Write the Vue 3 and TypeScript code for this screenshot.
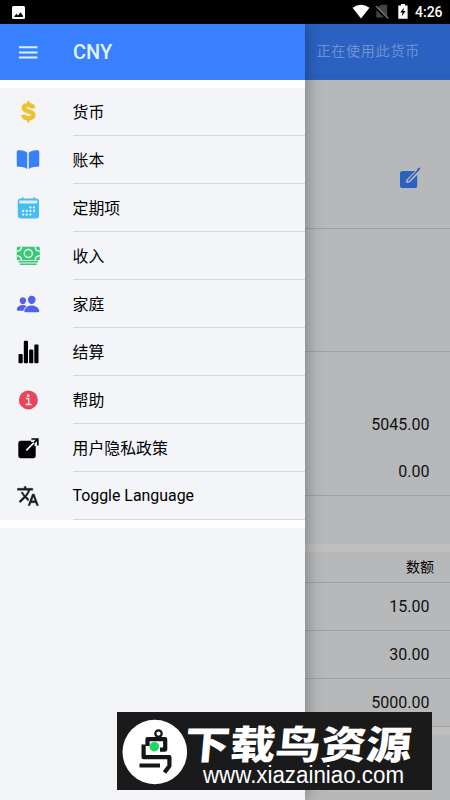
<script setup lang="ts">
interface MenuItem {
  icon: string
  label: string
}

const menu: MenuItem[] = [
  { icon: 'dollar', label: '货币' },
  { icon: 'book', label: '账本' },
  { icon: 'calendar', label: '定期项' },
  { icon: 'cash', label: '收入' },
  { icon: 'people', label: '家庭' },
  { icon: 'stats', label: '结算' },
  { icon: 'info', label: '帮助' },
  { icon: 'open', label: '用户隐私政策' },
  { icon: 'translate', label: 'Toggle Language' },
]

const totals: string[] = ['5045.00', '0.00']
const amounts: string[] = ['15.00', '30.00', '5000.00']
const calendarDots: [number, number][] = [
  [14.4, 11.4], [18, 11.4],
  [7.2, 15], [10.8, 15], [14.4, 15], [18, 15],
  [7.2, 18.6], [10.8, 18.6], [14.4, 18.6],
]
</script>

<template>
  <div class="screen">
    <header class="status">
      <svg class="status-photo" viewBox="0 0 13 13">
        <rect width="13" height="13" rx="1.6" fill="#fff" />
        <path d="M2 11 4.3 7.8 6 9.6 8.5 6.3 11 9.7V11z" fill="#000" />
      </svg>
      <svg class="status-icons" viewBox="0 0 56 16">
        <path d="M.5 3.8Q9-2.2 17.5 3.8L9 14.6z" fill="#fff" />
        <path d="M28.8.8H35.2V13.5L25 4.2z M24.3 6V13.5H32z" fill="#444" />
        <path d="M24 2 36.3 14.5" stroke="#777" stroke-width="1.2" />
        <path d="M49 0h4v1.4h2.6v13.4h-9.3V1.4H49z" fill="#fff" />
        <path d="m52.2 3.5-4 5h2.4l-1 4 4-5.4h-2.4z" fill="#000" />
      </svg>
      <span class="clock">4:26</span>
    </header>

    <main class="page">
      <div class="page-bar"><span>正在使用此货币</span></div>
      <section class="summary">
        <svg class="edit" viewBox="0 0 22 22">
          <rect x="1" y="4" width="17.2" height="17" rx="2.6" fill="#2b62c0" />
          <path d="M18.6 3.6 9 13.2l-.6 1.3 1.6-.6 9-9" fill="none" stroke="#b6b8ba" stroke-width="3" stroke-linejoin="round" />
          <path d="M9 14 19.5 2.8" stroke="#2b62c0" stroke-width="1.5" />
          <path d="M19.2 2.7 20.2 1.6" stroke="#2b62c0" stroke-width="2" stroke-linecap="round" />
        </svg>
      </section>
      <section class="blank"></section>
      <section class="totals">
        <div v-for="value in totals" :key="value" class="value">{{ value }}</div>
      </section>
      <section class="spacer"></section>
      <section class="table">
        <div class="table-head">数额</div>
        <div v-for="value in amounts" :key="value" class="value lined">{{ value }}</div>
      </section>
    </main>

    <aside class="drawer">
      <div class="drawer-bar">
        <svg class="burger" viewBox="0 0 19 13">
          <path d="M0 1.2H18.5M0 6.4H18.5M0 11.6H18.5" stroke="#dcf3ff" stroke-width="2" />
        </svg>
        <span>CNY</span>
      </div>
      <nav class="list">
        <div v-for="item in menu" :key="item.icon" class="item">
          <svg v-if="item.icon === 'dollar'" class="icon" viewBox="0 0 24 24">
            <path d="M17.5 8.4C17 6.1 15.2 5.2 12.5 5.2 9.6 5.2 7.8 6.2 7.8 8.1 7.8 12.6 17.4 10 17.4 15.1 17.4 17.3 15.5 18.4 12.4 18.4 9.3 18.4 7.5 17.2 7.2 14.8" fill="none" stroke="#efc02b" stroke-width="4.3" />
            <path d="M12.4 1.2V5M12.4 18V22.4" stroke="#efc02b" stroke-width="2.6" />
          </svg>
          <svg v-else-if="item.icon === 'book'" class="icon" viewBox="0 0 512 512">
            <path fill="#397ff8" d="M202.24 74C166.11 56.75 115.61 48.3 48 48a31.36 31.36 0 00-17.92 5.33A32 32 0 0016 79.9V366c0 19.34 13.76 33.93 32 33.93 71.07 0 142.36 6.64 185.06 47a4.11 4.11 0 006.94-3V106.82a15.89 15.89 0 00-5.46-12A143 143 0 00202.24 74zM481.92 53.3A31.33 31.33 0 00464 48c-67.61.3-118.11 8.71-154.24 26a143.31 143.31 0 00-32.31 20.78 15.93 15.93 0 00-5.45 12v337.13a3.93 3.93 0 006.68 2.81c25.67-25.5 70.72-46.82 185.36-46.81a32 32 0 0032-32v-288a32 32 0 00-14.12-26.61z" />
          </svg>
          <svg v-else-if="item.icon === 'calendar'" class="icon" viewBox="0 0 24 24">
            <rect x="1.8" y="2.6" width="21.2" height="19.8" rx="3" fill="#46bdf2" />
            <path d="M6.6 1.2V4M18.2 1.2V4" stroke="#46bdf2" stroke-width="1.6" />
            <rect x="3.3" y="4.4" width="18.2" height="3" rx="1" fill="#d9f2fd" />
            <circle v-for="dot in calendarDots" :key="dot.join()" :cx="dot[0]" :cy="dot[1]" r="1.15" fill="#e4f7ff" />
          </svg>
          <svg v-else-if="item.icon === 'cash'" class="icon" viewBox="0 0 24 24">
            <rect x=".8" y="2.8" width="23" height="13.4" rx="1.4" fill="#3cc878" />
            <circle cx="12.3" cy="9.5" r="4" fill="none" stroke="#e3faed" stroke-width="1.4" />
            <path d="M.8 7.2Q5.4 7 5.4 2.8M23.8 7.2Q19.2 7 19.2 2.8M.8 11.8Q5.4 12 5.4 16.2M23.8 11.8Q19.2 12 19.2 16.2" fill="none" stroke="#e3faed" stroke-width="1.4" />
            <path d="M2.6 17.8H22M4 20.2H20.6" stroke="#3cc878" stroke-width="1.5" />
          </svg>
          <svg v-else-if="item.icon === 'people'" class="icon" viewBox="0 0 512 512">
            <path fill="#5260ee" d="M336 256c-20.56 0-40.44-9.18-56-25.84-15.13-16.25-24.37-37.92-26-61-1.74-24.62 5.77-47.26 21.14-63.76S312 80 336 80c23.83 0 45.38 9.06 60.7 25.52 15.47 16.62 23 39.22 21.26 63.63-1.67 23.11-10.9 44.77-26 61C376.44 246.82 356.57 256 336 256zM467.83 432H204.18a27.71 27.71 0 01-22-10.67 30.22 30.22 0 01-5.26-25.79c8.42-33.81 29.28-61.85 60.32-81.08C264.79 297.4 299.86 288 336 288c36.85 0 71 9 98.71 26.05 31.11 19.13 52 47.33 60.38 81.55a30.27 30.27 0 01-5.32 25.78A27.68 27.68 0 01467.83 432zM147 260c-35.19 0-66.13-32.72-69-72.93-1.42-20.6 5-39.65 18-53.62 12.86-13.83 31-21.45 51-21.45s38 7.66 50.93 21.57c13.1 14.08 19.5 33.09 18 53.52-2.87 40.2-33.8 72.91-68.93 72.91zM212.66 291.45c-17.59-8.6-40.42-12.9-65.65-12.9-29.46 0-58.07 7.68-80.57 21.62C40.93 316 23.77 339.05 16.84 366.88a27.39 27.39 0 004.79 23.36A25.32 25.32 0 0041.72 400h111a8 8 0 007.87-6.57c.11-.63.25-1.26.41-1.88 8.48-34.06 28.35-62.84 57.71-83.82a8 8 0 00-.63-13.39c-1.57-.92-3.37-1.89-5.42-2.89z" />
          </svg>
          <svg v-else-if="item.icon === 'stats'" class="icon" viewBox="0 0 24 24">
            <rect x="2.5" y="14" width="4.2" height="9.3" rx="1.1" />
            <rect x="7.8" y=".8" width="4.2" height="22.5" rx="1.1" />
            <rect x="13.1" y="9.6" width="4.2" height="13.7" rx="1.1" />
            <rect x="18.3" y="4.4" width="4.2" height="18.9" rx="1.1" />
          </svg>
          <svg v-else-if="item.icon === 'info'" class="icon" viewBox="0 0 24 24">
            <circle cx="12.4" cy="11.9" r="9.5" fill="#e8455c" />
            <circle cx="12.2" cy="7.4" r="1.5" fill="#ffe0e4" />
            <path d="M10 10.6H12.7V16.3M9.6 16.5H15.6" fill="none" stroke="#ffe0e4" stroke-width="1.5" />
          </svg>
          <svg v-else-if="item.icon === 'open'" class="icon" viewBox="0 0 24 24">
            <rect x="2.3" y="4.8" width="17.4" height="17.4" rx="2.6" />
            <path d="M10.8 13.9 20.5 4.2" stroke="#f3f4f8" stroke-width="1.7" stroke-linecap="round" />
            <path d="M15 5.2H19.3V10" fill="none" stroke="#f3f4f8" stroke-width="1.6" />
            <path d="M15.4 3H21.8V9.4M21.6 3.2 18 6.8" fill="none" stroke="#000" stroke-width="1.7" />
          </svg>
          <svg v-else class="icon translate" viewBox="0 0 24 24">
            <path fill="#1c1d20" stroke="#1c1d20" stroke-width=".4" d="M12.87 15.07l-2.54-2.51.03-.03c1.74-1.94 2.98-4.17 3.71-6.53H17V4h-7V2H8v2H1v1.99h11.17C11.5 7.92 10.44 9.75 9 11.35 8.07 10.32 7.3 9.19 6.69 8h-2c.73 1.63 1.73 3.17 2.98 4.56l-5.09 5.02L4 19l5-5 3.11 3.11.76-2.04zM18.5 10h-2L12 22h2l1.12-3h4.75L21 22h2l-4.5-12zm-2.62 7l1.62-4.33L19.12 17h-3.24z" />
          </svg>
          <span class="label" :class="{ latin: item.icon === 'translate' }">{{ item.label }}</span>
        </div>
      </nav>
      <div class="drawer-rest"></div>
    </aside>

    <svg class="watermark" viewBox="0 0 315 78">
      <rect width="315" height="78" fill="#1a1a1a" />
      <circle cx="37.8" cy="40" r="32.3" fill="#fff" />
      <g fill="none" stroke="#151515" stroke-width="4.2" stroke-linejoin="round">
        <circle cx="41.5" cy="21.6" r="3.2" stroke-width="2.2" />
        <path d="M30.5 34V27.2H48.2V37.6H43" />
        <path d="M26.6 32.5V45.2H52.4V54L47.5 60.5M22.5 53.5H43" />
      </g>
      <circle cx="37.3" cy="34.7" r="4.8" fill="#1ed760" />
      <g transform="translate(66.5 46.5) skewX(-5) scale(1 .87)">
        <text class="wm-title" x="0" y="0" textLength="227" lengthAdjust="spacingAndGlyphs">下载鸟资源</text>
      </g>
      <text class="wm-url" x="86" y="70.5" textLength="201" lengthAdjust="spacingAndGlyphs">www.xiazainiao.com</text>
    </svg>
  </div>
</template>

<style>
body {
  margin: 0;
  overflow: hidden;
}
</style>

<style scoped>
.screen {
  position: relative;
  width: 450px;
  height: 800px;
  display: flex;
  flex-direction: column;
  overflow: hidden;
  background: #b6b8ba;
  font-family: Roboto, "Noto Sans CJK SC", sans-serif;
  color: #000;
}
.screen * {
  box-sizing: border-box;
}
.status {
  height: 24px;
  flex: none;
  display: flex;
  align-items: center;
  padding: 0 8px 0 12px;
  background: #000;
}
.status-photo {
  width: 13px;
  height: 13px;
}
.status-icons {
  width: 56px;
  height: 16px;
  margin-left: auto;
}
.clock {
  width: 28px;
  margin-left: 7px;
  margin-right: -1px;
  color: #fff;
  font-size: 14px;
  font-weight: 500;
  line-height: 25px;
  white-space: nowrap;
}
.page {
  flex: 1;
  display: flex;
  flex-direction: column;
}
.page-bar {
  height: 56px;
  flex: none;
  padding-right: 30px;
  background: linear-gradient(#2b62c1 51px, #295cb5 51px, #295cb5 52px, #2b62c1 52px);
  color: #6f91d0;
  font-size: 14px;
  letter-spacing: 0.8px;
  line-height: 54px;
  text-align: right;
}
.summary {
  height: 149px;
  flex: none;
  display: flex;
  justify-content: flex-end;
  padding: 87px 29px 0 0;
  border-bottom: 1px solid #9fa1a3;
}
.edit {
  width: 22px;
  height: 22px;
}
.blank {
  height: 123px;
  flex: none;
  border-bottom: 1px solid #9fa1a3;
}
.totals {
  height: 144px;
  flex: none;
  padding-top: 49px;
  border-bottom: 1px solid #9fa1a3;
}
.value {
  height: 47px;
  padding-right: 20.5px;
  font-size: 16px;
  line-height: 48px;
  text-align: right;
  color: #111;
}
.spacer {
  height: 56px;
  flex: none;
  border-bottom: 8px solid #bfbfbf;
}
.table {
  flex: none;
  border-bottom: 8px solid #bfbfbf;
}
.table-head {
  height: 31px;
  padding-right: 16px;
  border-bottom: 1px solid #9fa1a3;
  font-size: 14px;
  line-height: 30px;
  text-align: right;
}
.lined {
  height: 48px;
  border-bottom: 1px solid #9fa1a3;
}
.drawer {
  position: absolute;
  top: 24px;
  left: 0;
  width: 304.5px;
  height: 776px;
  display: flex;
  flex-direction: column;
  background: #fff;
  box-shadow: 2px 0 14px rgba(0, 0, 0, 0.3);
  clip-path: inset(0 -30px 0 0);
}
.drawer-bar {
  height: 56px;
  flex: none;
  display: flex;
  align-items: center;
  gap: 35px;
  padding-left: 19px;
  background: #3880ff;
  color: #e2f4ff;
  font-size: 20px;
  font-weight: 500;
}
.burger {
  width: 19px;
  height: 13px;
}
.list {
  margin: 8px 0;
  background: #f3f5f9;
}
.item {
  height: 48px;
  display: flex;
  align-items: center;
  gap: 32.5px;
  padding-left: 16px;
}
.icon {
  width: 24px;
  height: 24px;
  flex: none;
}
.translate {
  padding: 0.5px;
}
.label {
  flex: 1;
  height: 48px;
  border-bottom: 1px solid #d4d5d9;
  font-size: 15.9px;
  line-height: 49px;
  white-space: nowrap;
}
.latin {
  line-height: 47px;
}
.drawer-rest {
  flex: 1;
  background: #f3f5f9;
}
.watermark {
  position: absolute;
  left: 117px;
  top: 712px;
  width: 315px;
  height: 78px;
}
.wm-title {
  fill: #fff;
  font-family: "Noto Sans CJK SC", sans-serif;
  font-size: 45px;
  font-weight: 900;
}
.wm-url {
  fill: #fff;
  font-family: "Liberation Sans", sans-serif;
  font-size: 23.5px;
}
</style>
